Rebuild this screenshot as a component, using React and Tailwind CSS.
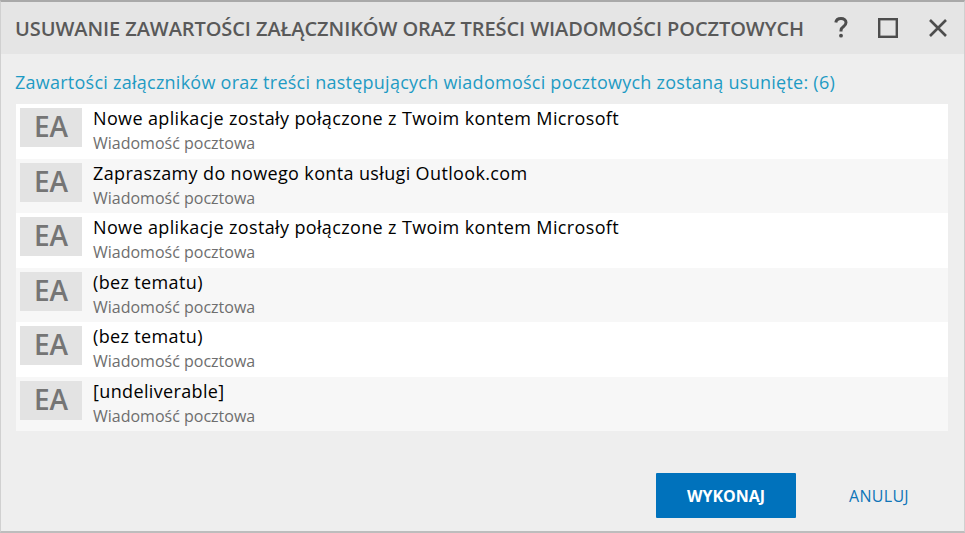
const rows = [
  "Nowe aplikacje zostały połączone z Twoim kontem Microsoft",
  "Zapraszamy do nowego konta usługi Outlook.com",
  "Nowe aplikacje zostały połączone z Twoim kontem Microsoft",
  "(bez tematu)",
  "(bez tematu)",
  "[undeliverable]",
];

export default function App() {
  return (
    <div className="w-[965px] h-[533px] flex flex-col overflow-hidden bg-[#eeeeee] border-t-2 border-b-2 border-l border-r border-t-[#a9a9a9] border-b-[#bdbdbd] border-l-[#d0d0d0] border-r-[#d0d0d0] font-['Open_Sans',sans-serif]">
      <div className="h-[52px] shrink-0 flex items-center bg-[#e5e5e5] pl-[14px]">
        <h1 className="flex-1 pt-[2px] text-[20px] font-semibold text-[#595959] whitespace-nowrap tracking-[-0.08px]">
          USUWANIE ZAWARTOŚCI ZAŁĄCZNIKÓW ORAZ TREŚCI WIADOMOŚCI POCZTOWYCH
        </h1>
        <div className="flex items-center gap-[30px] pr-[16px] text-[#4d4d4d]">
          <svg width="14" height="22" viewBox="0 0 14 22" fill="none" stroke="currentColor" strokeWidth="3">
            <path d="M1.800 5.500C2.200 2.800 4.200 1.600 7 1.600c3 0 5 1.600 5 4 0 1.900-1 2.900-2.400 3.900C8 10.600 7 11.500 7 13.500v1" />
            <circle cx="7" cy="18.700" r="1.900" fill="currentColor" stroke="none" />
          </svg>
          <svg width="20" height="20" viewBox="0 0 20 20" fill="none" stroke="currentColor" strokeWidth="2.400">
            <rect x="1.200" y="1.200" width="17.600" height="17.600" />
          </svg>
          <svg width="20" height="20" viewBox="0 0 20 20" fill="none" stroke="currentColor" strokeWidth="2.600">
            <path d="M2 2l16 16M18 2L2 18" />
          </svg>
        </div>
      </div>

      <div className="flex-1 flex flex-col px-[15px]">
        <p className="h-[50px] shrink-0 flex items-center text-[18px] text-[#1e9bc4] whitespace-nowrap tracking-[0.25px] pt-[6px] -ml-[1px]">
          Zawartości załączników oraz treści następujących wiadomości pocztowych zostaną usunięte: (6)
        </p>

        <div className="w-[932px] flex flex-col">
          {rows.map((title, i) => (
            <div key={i} className={`h-[54.5px] flex items-start pt-[4px] pl-[4px] ${i % 2 === 0 ? "bg-white" : "bg-[#f7f7f7]"}`}>
              <div className="w-[62px] h-[39px] shrink-0 flex items-center justify-center pb-[3px] bg-[#e3e3e3] text-[#757575] text-[28px] font-semibold">
                EA
              </div>
              <div className="ml-[11px] flex flex-col">
                <span className="text-[18px] leading-[24px] -mt-[2px] text-black whitespace-nowrap tracking-[0.36px]">{title}</span>
                <span className="text-[16px] leading-[20px] mt-[3px] text-[#6e6e6e] whitespace-nowrap">Wiadomość pocztowa</span>
              </div>
            </div>
          ))}
        </div>

        <div className="flex items-start mt-[42px]">
          <button className="ml-[640px] w-[140px] h-[45px] bg-[#0072bc] rounded-[1px] text-white text-[16px] font-bold">
            WYKONAJ
          </button>
          <button className="ml-[53px] h-[45px] text-[#0f75b8] text-[16px] tracking-[0.3px]">
            ANULUJ
          </button>
        </div>
      </div>
    </div>
  );
}
